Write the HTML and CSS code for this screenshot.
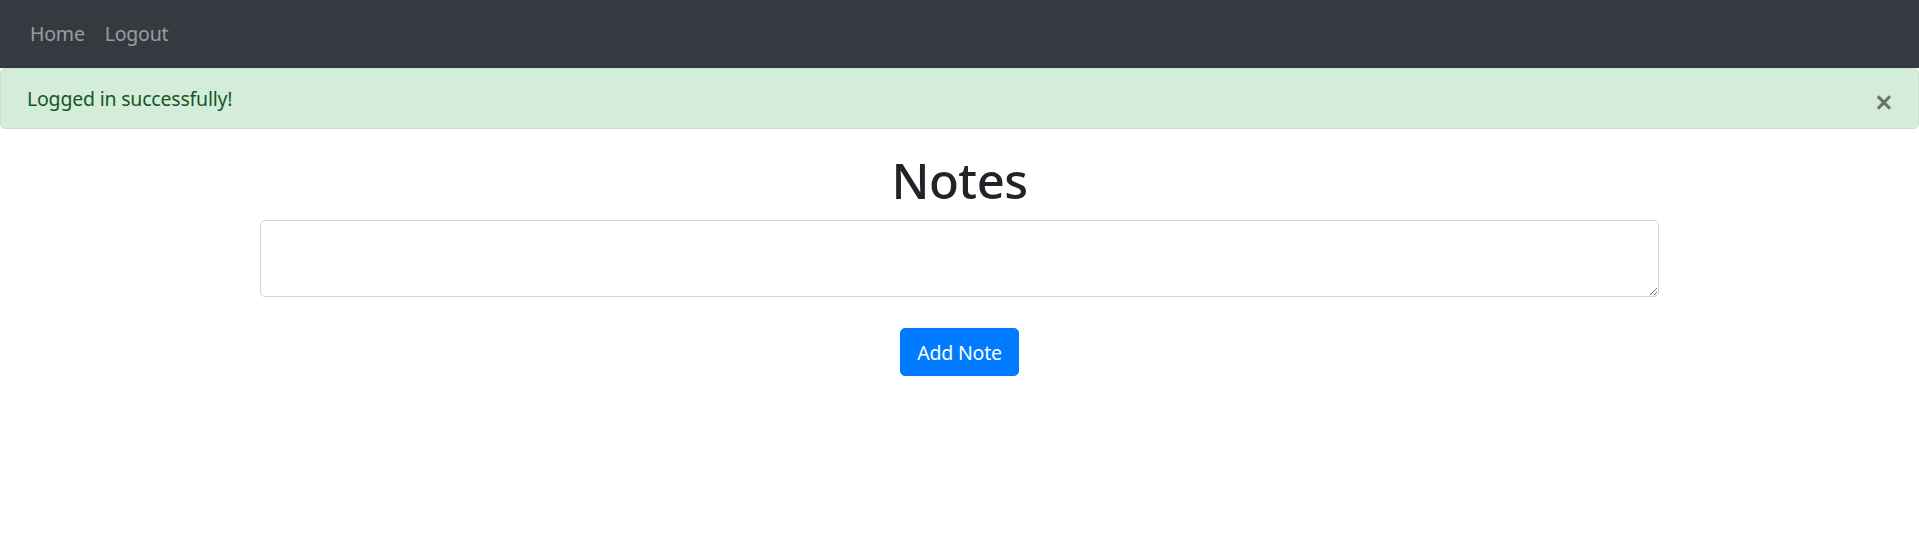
FILE: index.html
```html
<!DOCTYPE html>
<html lang="en">
<head>
<meta charset="utf-8">
<title>Notes</title>
<link rel="stylesheet" href="styles.css">
</head>
<body>
<nav class="navbar">
  <a class="nav-link" href="#">Home</a>
  <a class="nav-link" href="#">Logout</a>
</nav>
<div class="alert">
  <span class="alert-text">Logged in successfully!</span>
  <button class="close" type="button">&times;</button>
</div>
<main class="main">
  <h1 class="title">Notes</h1>
  <form class="note-form">
    <textarea class="note-input" name="note"></textarea>
    <button class="btn-primary" type="button">Add Note</button>
  </form>
</main>
</body>
</html>
```
FILE: styles.css
```css
html, body {
  margin: 0;
  padding: 0;
}
body {
  font-family: "Noto Sans", "Open Sans", sans-serif;
  font-size: 19.5px;
  letter-spacing: -0.2px;
  color: #212529;
  background: #fff;
}
.navbar {
  display: flex;
  align-items: center;
  height: 68px;
  padding: 0 20px;
  background: #343a40;
  box-sizing: border-box;
}
.nav-link {
  color: rgba(255, 255, 255, 0.5);
  text-decoration: none;
  padding: 0 10px;
  line-height: 29px;
  margin-top: -2px;
}
.alert {
  display: flex;
  align-items: center;
  justify-content: space-between;
  height: 61px;
  box-sizing: border-box;
  padding: 0 24px 0 26px;
  background: #d4edda;
  border: 1px solid #c3e6cb;
  border-radius: 5px;
  color: #155724;
}
.alert-text {
  line-height: 29px;
}
.close {
  background: none;
  border: 0;
  padding: 0;
  font-family: inherit;
  font-size: 32px;
  font-weight: 600;
  line-height: 1;
  color: #000;
  opacity: 0.5;
  margin-right: 1px;
  margin-top: 6px;
  cursor: pointer;
}
.main {
  display: flex;
  flex-direction: column;
  align-items: center;
}
.title {
  margin: 22px 0 10px;
  font-size: 49px;
  font-weight: 500;
  letter-spacing: -0.5px;
  line-height: 59px;
}
.note-form {
  display: flex;
  flex-direction: column;
  align-items: center;
  width: 1399px;
}
.note-input {
  width: 100%;
  height: 77px;
  box-sizing: border-box;
  border: 1px solid #ced4da;
  border-radius: 5px;
  padding: 7px 15px;
  font-family: inherit;
  font-size: 19.5px;
  margin: 0;
}
.btn-primary {
  margin-top: 31px;
  width: 119px;
  height: 48px;
  background: #007bff;
  border: 1px solid #007bff;
  border-radius: 5px;
  color: #fff;
  font-family: inherit;
  font-size: 19.5px;
  letter-spacing: -0.2px;
  padding: 0;
  cursor: pointer;
}
```
